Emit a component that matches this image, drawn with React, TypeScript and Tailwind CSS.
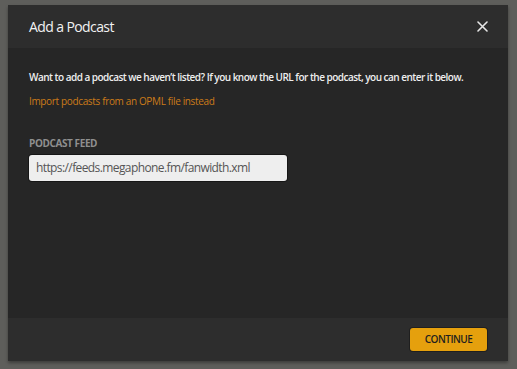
import React from 'react';

function CloseIcon() {
  return (
    <svg width="11" height="11" viewBox="0 0 11 11" className="block">
      <path d="M1 1 L10 10 M10 1 L1 10" stroke="#e6e6e6" strokeWidth="1.6" strokeLinecap="round" />
    </svg>
  );
}

export default function App() {
  return (
    <div
      className="h-[369px] w-[517px] bg-[#5e5e5b] pl-[8px] pt-[5px]"
      style={{ fontFamily: '"Open Sans", "Noto Sans", sans-serif' }}
    >
      <div className="flex h-[356px] w-[500px] flex-col shadow-[0_2px_3px_rgba(0,0,0,0.35)]">
        <div className="flex h-[43px] items-center justify-between bg-[#2d2d2d] pl-[21px] pr-[16px]">
          <h1 className="text-[14px] font-normal tracking-[-0.6px] text-[#f2f2f2]">Add a Podcast</h1>
          <button className="p-1">
            <CloseIcon />
          </button>
        </div>

        <div className="flex-1 bg-[#262626] px-[21px] pt-[20px]">
          <p className="whitespace-nowrap text-[10px] font-semibold leading-[18px] tracking-[-0.52px] text-[#eeeeee]">
            Want to add a podcast we haven’t listed? If you know the URL for the podcast, you can enter it below.
          </p>
          <a className="mt-[6px] block text-[10px] leading-[18px] tracking-[-0.35px] text-[#cc7b19]">
            Import podcasts from an OPML file instead
          </a>
          <label className="mt-[25px] block text-[10px] font-bold uppercase leading-[16px] tracking-[-0.4px] text-[#8f8f8f]">
            Podcast Feed
          </label>
          <div className="mt-[4px] flex h-[26px] w-[258px] items-center rounded-[3px] bg-[#eeeeee] px-[7px] shadow-[0_0_0_1px_rgba(0,0,0,0.4)]">
            <span className="text-[12px] tracking-[-0.6px] text-[#555555]">https://feeds.megaphone.fm/fanwidth.xml</span>
          </div>
        </div>

        <div className="flex h-[43px] items-center justify-end bg-[#2d2d2d] pr-[21px]">
          <button className="h-[23px] w-[77px] rounded-[3px] bg-[#e5a00d] text-[10px] font-semibold uppercase tracking-[-0.5px] text-[#1f1f1f] shadow-[0_0_0_1px_rgba(0,0,0,0.3)]">
            Continue
          </button>
        </div>
      </div>
    </div>
  );
}
